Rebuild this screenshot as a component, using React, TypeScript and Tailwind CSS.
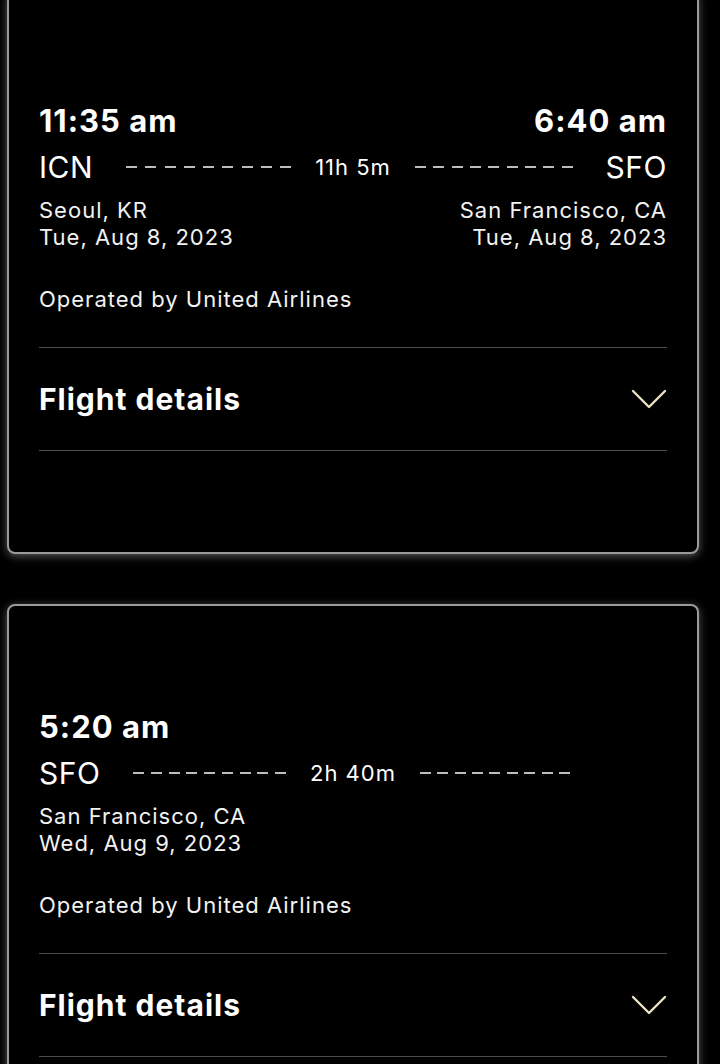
import type { ReactNode } from 'react'

interface Leg {
  departTime: string
  arriveTime?: string
  from: string
  to?: string
  duration: string
  fromCity: string
  fromDate: string
  toCity?: string
  toDate?: string
  operator: string
}

const legs: Leg[] = [
  {
    departTime: '11:35 am',
    arriveTime: '6:40 am',
    from: 'ICN',
    to: 'SFO',
    duration: '11h 5m',
    fromCity: 'Seoul, KR',
    fromDate: 'Tue, Aug 8, 2023',
    toCity: 'San Francisco, CA',
    toDate: 'Tue, Aug 8, 2023',
    operator: 'Operated by United Airlines',
  },
  {
    departTime: '5:20 am',
    from: 'SFO',
    duration: '2h 40m',
    fromCity: 'San Francisco, CA',
    fromDate: 'Wed, Aug 9, 2023',
    operator: 'Operated by United Airlines',
  },
]

// 점선 (9개 대시, 남는 폭에 맞춰 벌어짐)
function Dashes({ className = '' }: { className?: string }) {
  return (
    <div className={`flex flex-1 justify-between ${className}`}>
      {Array.from({ length: 9 }).map((_, idx) => (
        <span key={idx} className="h-[2px] w-[11px] bg-[#bdbdbd]" />
      ))}
    </div>
  )
}

function Chevron() {
  return (
    <svg width="36" height="22" viewBox="0 0 36 22" fill="none">
      <polyline
        points="2,3 18,19 34,3"
        stroke="#eee2c6"
        strokeWidth="2.4"
        strokeLinecap="round"
        strokeLinejoin="round"
      />
    </svg>
  )
}

function Card({
  leg,
  topSpace,
  className = '',
  children,
}: {
  leg: Leg
  topSpace: string
  className?: string
  children?: ReactNode
}) {
  return (
    <div
      className={`ml-[7px] w-[692px] rounded-[8px] border-2 border-[#9a9a9a] bg-black px-[30px] shadow-[0_2px_8px_rgba(255,255,255,0.35)] ${className}`}
    >
      {/* 상단 빈 영역 (항공사 로고 자리) */}
      <div className={topSpace} />
      {/* 시간 */}
      <div className="flex justify-between text-[31px] leading-[36px] font-bold tracking-[1px] text-white">
        <span>{leg.departTime}</span>
        <span>{leg.arriveTime}</span>
      </div>
      {/* 공항 코드 + 소요시간 */}
      <div className="mt-[10px] grid grid-cols-[1fr_auto_1fr] items-center text-white">
        <div className="flex items-center">
          <span className="text-[30px] leading-[36px] tracking-[0.5px]">
            {leg.from}
          </span>
          <Dashes className="ml-[33px]" />
        </div>
        <span className="px-[24px] text-[22px] leading-[36px] tracking-[1px]">
          {leg.duration}
        </span>
        <div className="flex items-center">
          <Dashes className="mr-[33px]" />
          {leg.to ? (
            <span className="text-[30px] leading-[36px] tracking-[0.5px]">
              {leg.to}
            </span>
          ) : (
            <span className="w-[64px]" />
          )}
        </div>
      </div>
      {/* 도시 및 날짜 */}
      <div className="mt-[12px] flex justify-between text-[22px] leading-[27px] tracking-[1px] text-[#f2f2f2]">
        <div className="flex flex-col">
          <span>{leg.fromCity}</span>
          <span>{leg.fromDate}</span>
        </div>
        <div className="flex flex-col items-end">
          <span>{leg.toCity}</span>
          <span>{leg.toDate}</span>
        </div>
      </div>
      <div className="mt-[34px] text-[22px] leading-[28px] tracking-[1px] text-[#f2f2f2]">
        {leg.operator}
      </div>
      <div className="mt-[34px] h-px bg-[#4d4d4d]" />
      {/* 상세 토글 */}
      <div className="flex h-[102px] items-center justify-between">
        <span className="text-[30px] leading-[36px] font-bold tracking-[1px] text-white">
          Flight details
        </span>
        <Chevron />
      </div>
      <div className="h-px bg-[#4d4d4d]" />
      {children}
    </div>
  )
}

export default function App() {
  return (
    <div
      className="min-h-[1064px] w-[720px] overflow-hidden bg-black"
      style={{ fontFamily: 'Inter, "Noto Sans", sans-serif' }}
    >
      <div className="flex flex-col gap-[50px]">
        <Card leg={legs[0]} topSpace="h-[111px]" className="-mt-[10px]">
          <div className="h-[101px]" />
        </Card>
        <Card leg={legs[1]} topSpace="h-[103px]">
          <div className="h-[101px]" />
        </Card>
      </div>
    </div>
  )
}
